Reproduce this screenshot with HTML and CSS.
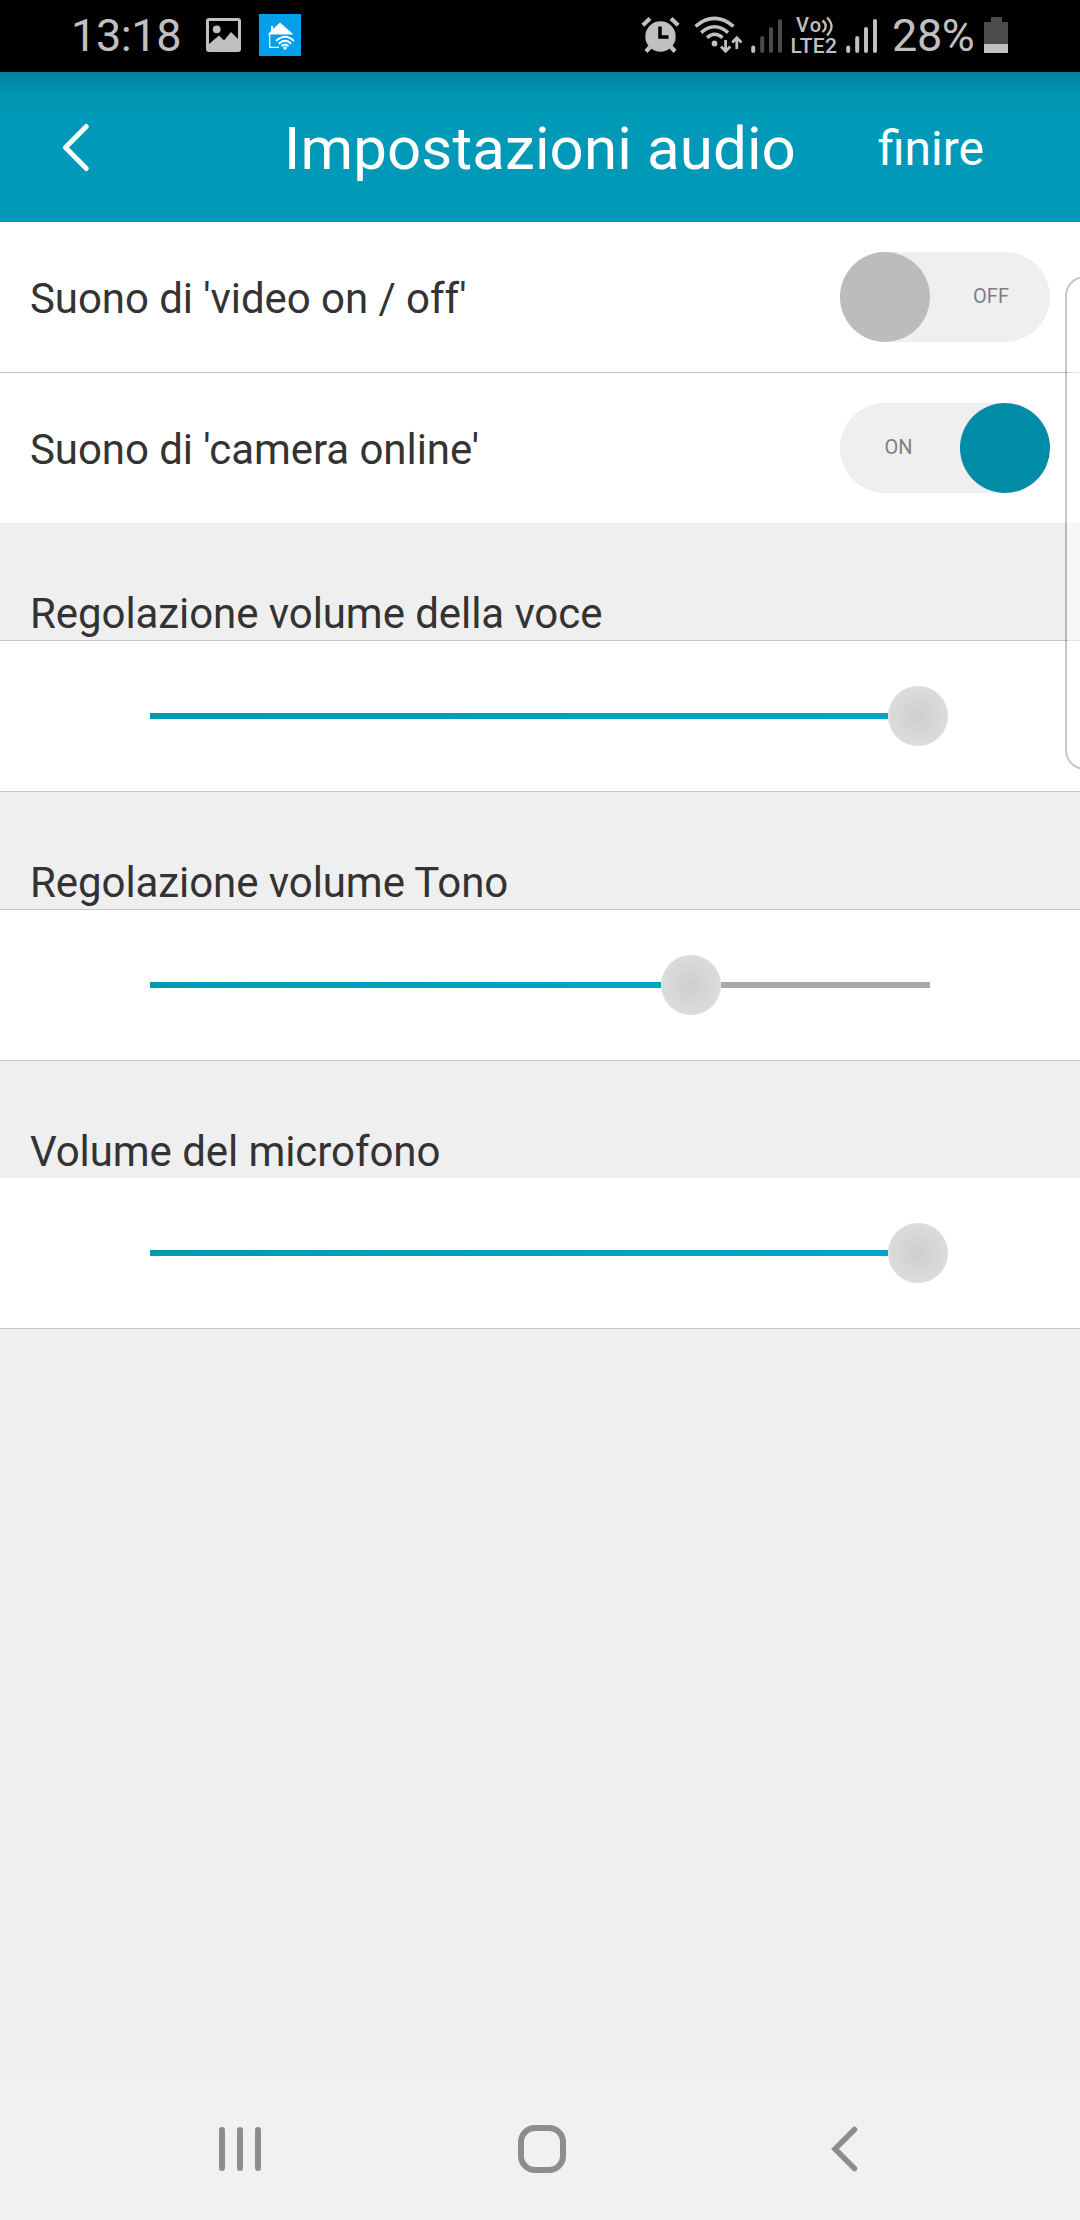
FILE: index.html
```html
<!DOCTYPE html>
<html lang="it">
<head>
<meta charset="utf-8">
<title>Impostazioni audio</title>
<link rel="stylesheet" href="styles.css">
</head>
<body>
<div class="screen">
  <div class="status">
    <div class="status-group">
      <span class="clock">13:18</span>
      <svg class="icon-picture" width="36" height="36" viewBox="0 0 36 36">
        <path fill="#c0c0c0" fill-rule="evenodd" d="M3 1H32Q35 1 35 4V32Q35 35 32 35H3Q0 35 0 32V4Q0 1 3 1ZM3 4V27L13 18.500L18 23.500L25 15L32 22V4Z"/>
        <circle cx="10.700" cy="12.300" r="3.900" fill="#c0c0c0"/>
      </svg>
      <svg class="icon-app" width="42" height="42" viewBox="0 0 42 42">
        <path fill="#00a0ea" d="M0 0H42V42H0Z"/>
        <path fill="#fff" d="M21 8.500L34.500 20.500H8.500L12 17V12H14V15Z"/>
        <path fill="none" stroke="#fff" stroke-width="1.300" d="M10.700 20V33.300H20"/>
        <g fill="none" stroke="#fff" stroke-width="1.900">
          <path d="M17 27Q26 18.500 35 27"/>
          <path d="M19.800 29.700Q26 24 32.200 29.700"/>
          <path d="M22.500 32.200Q26 29 29.500 32.200"/>
        </g>
        <circle cx="26" cy="34" r="1.700" fill="#fff"/>
      </svg>
    </div>
    <div class="status-group">
      <svg class="icon-alarm" width="40" height="38" viewBox="0 0 40 38">
        <g fill="none" stroke="#c0c0c0" stroke-width="4.200">
          <path d="M1.800 9.200L9 2.500M30 2.500L37.200 9.200"/>
          <path d="M9 31L5 35.500M30 31L34 35.500"/>
        </g>
        <circle cx="19.500" cy="20.500" r="15.200" fill="#c0c0c0"/>
        <path fill="none" stroke="#000" stroke-width="3.500" d="M19 10.500V21H27.500"/>
      </svg>
      <svg class="icon-wifi" width="50" height="38" viewBox="0 0 50 38">
        <g fill="none" stroke="#c0c0c0" stroke-width="3.500">
          <path d="M1.500 10.300Q20.500-5.500 39.500 10.300"/>
          <path d="M7.200 16.600Q20.500 5 34 16.600"/>
          <path d="M13 21.600Q20.500 15 28.500 21.600"/>
        </g>
        <circle cx="20.500" cy="27.500" r="2.900" fill="#c0c0c0"/>
        <path fill="none" stroke="#c0c0c0" stroke-width="2.800" d="M31.600 24V35M27 30.500L31.600 35.200L36.300 30.500M42.800 33V21.500M38.200 26.500L42.800 21.800L47.500 26.500"/>
      </svg>
      <svg class="icon-signal" width="32" height="34" viewBox="0 0 32 34">
        <path stroke="#c0c0c0" stroke-width="4" stroke-linecap="round" d="M2.200 28.500V32"/>
        <path stroke="#4b4b4b" stroke-width="4" stroke-linecap="round" d="M11.200 19V32M20 10V32M29 2V32"/>
      </svg>
      <svg class="icon-volte" width="48" height="38" viewBox="0 0 48 38">
        <text x="5" y="16" class="volte-text volte-top" textLength="25">Vo</text>
        <path fill="none" stroke="#c0c0c0" stroke-width="2.300" d="M31.500 4.500Q38 10 31.500 16M36 1.500Q45 10 36 19.500"/>
        <text x="-.5" y="36.500" class="volte-text" textLength="46.500">LTE2</text>
      </svg>
      <svg class="icon-signal-full" width="32" height="34" viewBox="0 0 32 34">
        <path stroke="#c0c0c0" stroke-width="4" stroke-linecap="round" d="M2.200 28.500V32M11.200 19V32M20 10V32M29 2V32"/>
      </svg>
      <span class="percent">28%</span>
      <svg class="icon-battery" width="24" height="36" viewBox="0 0 24 36">
        <path fill="#4b4b4b" d="M7 0H18V5H24V28H0V5H7Z"/>
        <path fill="#c0c0c0" d="M0 27H24V36H0Z"/>
      </svg>
    </div>
  </div>

  <header class="header">
    <svg class="back" width="30" height="50" viewBox="0 0 30 50">
      <path d="M24.300 4.500L3.500 25.500L24.300 46.500" fill="none" stroke="#fff" stroke-width="5" stroke-linecap="round" stroke-linejoin="round"/>
    </svg>
    <h1 class="title">Impostazioni audio</h1>
    <span class="done">finire</span>
  </header>

  <main class="content">
    <div class="row row-divided">
      <span class="label">Suono di 'video on / off'</span>
      <div class="toggle"><span class="knob"></span><span class="toggle-text">OFF</span></div>
    </div>
    <div class="row">
      <span class="label">Suono di 'camera online'</span>
      <div class="toggle toggle-on"><span class="toggle-text">ON</span><span class="knob"></span></div>
    </div>

    <h2 class="heading heading-divided">Regolazione volume della voce</h2>
    <div class="slider-row">
      <div class="slider"><span class="fill" style="width: 738px"></span><span class="thumb"></span></div>
    </div>

    <h2 class="heading heading-divided">Regolazione volume Tono</h2>
    <div class="slider-row">
      <div class="slider"><span class="fill" style="width: 511px"></span><span class="thumb"></span><span class="rest"></span></div>
    </div>

    <h2 class="heading">Volume del microfono</h2>
    <div class="slider-row">
      <div class="slider"><span class="fill" style="width: 738px"></span><span class="thumb"></span></div>
    </div>
  </main>

  <nav class="nav">
    <svg width="50" height="50" viewBox="0 0 50 50">
      <path d="M7 6V44M25 6V44M43 6V44" stroke="#8d8d8d" stroke-width="6" stroke-linecap="round"/>
    </svg>
    <svg width="50" height="50" viewBox="0 0 50 50">
      <rect x="4" y="4" width="42" height="42" rx="14" fill="none" stroke="#8d8d8d" stroke-width="6"/>
    </svg>
    <svg width="50" height="50" viewBox="0 0 50 50">
      <path d="M35.500 5.500L16 25L35.500 44.500" fill="none" stroke="#8d8d8d" stroke-width="5.500" stroke-linecap="round"/>
    </svg>
  </nav>

  <div class="edge-panel"></div>
</div>
</body>
</html>
```
FILE: styles.css
```css
* {
  box-sizing: border-box;
}

body {
  margin: 0;
  background: #efefef;
  font-family: Roboto, "Liberation Sans", sans-serif;
  color: #333;
}

.screen {
  position: relative;
  display: flex;
  flex-direction: column;
  width: 1080px;
  height: 2220px;
  overflow: hidden;
}

svg {
  display: block;
  flex: none;
  overflow: visible;
}

.status {
  display: flex;
  justify-content: space-between;
  height: 72px;
  padding: 0 72px 0 71px;
  background: #000;
  color: #c0c0c0;
}

.status-group {
  display: flex;
  align-items: flex-start;
}

.clock,
.percent {
  font-size: 45px;
  letter-spacing: -.4px;
  line-height: 72px;
  white-space: nowrap;
}

.clock { width: 135px; }
.percent { width: 92px; }
.icon-picture { margin: 17px 17px 0 0; }
.icon-app { margin-top: 14px; }
.icon-alarm { margin: 16px 13px 0 0; }
.icon-wifi { margin: 16px 7px 0 0; }
.icon-signal { margin: 19px 8px 0 0; }
.icon-volte { margin: 16px 7px 0 0; }
.icon-signal-full { margin: 19px 14px 0 0; }
.icon-battery { margin-top: 17px; }

.volte-text {
  font-size: 21px;
  font-weight: 500;
  fill: #c0c0c0;
}

.volte-top {
  font-size: 20px;
}

.header {
  display: flex;
  align-items: center;
  height: 150px;
  padding-left: 62px;
  background: linear-gradient(#04819a, #008ba7 10px, #0094b1 24px, #0099b8 42px);
  color: #fff;
}

.title {
  width: 594px;
  margin: 4px 0 0 192px;
  font-size: 60px;
  font-weight: 400;
  letter-spacing: .13px;
  line-height: 70px;
  white-space: nowrap;
}

.done {
  margin-top: 3px;
  font-size: 48px;
  line-height: 56px;
}

.row {
  display: flex;
  align-items: center;
  justify-content: space-between;
  height: 150px;
  padding: 0 30px;
  background: #fff;
}

.row-divided {
  height: 151px;
  border-bottom: 1px solid #c4c4c4;
}

.label,
.heading {
  font-size: 42px;
  font-weight: 400;
  letter-spacing: -.07px;
  line-height: 50px;
  white-space: nowrap;
}

.label {
  margin-top: 3px;
}

.toggle {
  display: flex;
  width: 210px;
  height: 90px;
  border-radius: 45px;
  background: #efefef;
}

.toggle-text {
  flex: 1;
  padding-left: 2px;
  color: #808080;
  font-size: 20px;
  line-height: 88px;
  text-align: center;
}

.toggle-on .toggle-text {
  padding: 0 3px 0 0;
}

.knob {
  width: 90px;
  height: 90px;
  border-radius: 50%;
  background: #bcbcbc;
}

.toggle-on .knob {
  background: #008ba7;
}

.heading {
  height: 117px;
  margin: 0;
  padding: 66px 30px 0;
  background: #efefef;
}

.heading-divided {
  height: 118px;
  border-bottom: 1px solid #c4c4c4;
}

.slider-row {
  display: flex;
  height: 151px;
  padding: 0 150px;
  border-bottom: 1px solid #c4c4c4;
  background: #fff;
}

.slider {
  display: flex;
  align-items: center;
  flex: 1;
}

.fill {
  flex: none;
  height: 6px;
  background: linear-gradient(90deg, #0099b4, #00a5c6);
}

.thumb {
  flex: none;
  width: 60px;
  height: 60px;
  border-radius: 50%;
  background: radial-gradient(circle closest-side, #cecece, #dcdcdc);
}

.rest {
  flex: 1;
  height: 6px;
  background: #a9a9a9;
}

.nav {
  display: flex;
  align-items: center;
  justify-content: space-between;
  height: 144px;
  margin-top: auto;
  padding: 2px 211px 0 215px;
  background: #f1f1f1;
}

.edge-panel {
  position: absolute;
  top: 276px;
  left: 1065px;
  width: 60px;
  height: 494px;
  border: 2px solid rgba(0, 0, 0, .22);
  border-radius: 20px;
  background: rgba(255, 255, 255, .5);
  background-clip: padding-box;
}
```
